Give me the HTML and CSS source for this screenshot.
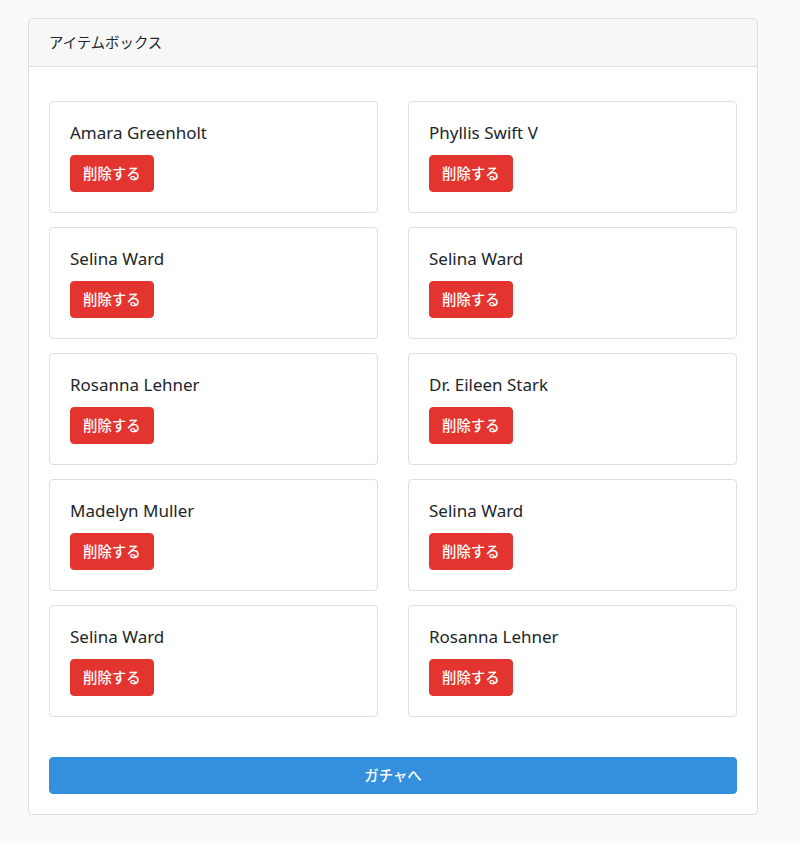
FILE: index.html
```html
<!DOCTYPE html>
<html lang="ja">
<head>
<meta charset="utf-8">
<title>アイテムボックス</title>
<link rel="stylesheet" href="styles.css">
</head>
<body>
<div class="page">
  <div class="card">
    <div class="card-header">アイテムボックス</div>
    <div class="card-body">
      <div class="grid">
        <div class="item"><div class="name">Amara Greenholt</div><button class="btn-del">削除する</button></div>
        <div class="item"><div class="name">Phyllis Swift V</div><button class="btn-del">削除する</button></div>
        <div class="item"><div class="name">Selina Ward</div><button class="btn-del">削除する</button></div>
        <div class="item"><div class="name">Selina Ward</div><button class="btn-del">削除する</button></div>
        <div class="item"><div class="name">Rosanna Lehner</div><button class="btn-del">削除する</button></div>
        <div class="item"><div class="name">Dr. Eileen Stark</div><button class="btn-del">削除する</button></div>
        <div class="item"><div class="name">Madelyn Muller</div><button class="btn-del">削除する</button></div>
        <div class="item"><div class="name">Selina Ward</div><button class="btn-del">削除する</button></div>
        <div class="item"><div class="name">Selina Ward</div><button class="btn-del">削除する</button></div>
        <div class="item"><div class="name">Rosanna Lehner</div><button class="btn-del">削除する</button></div>
      </div>
      <button class="btn-gacha">ガチャへ</button>
    </div>
  </div>
</div>
</body>
</html>
```
FILE: styles.css
```css
html, body {
  margin: 0;
  padding: 0;
}
body {
  background: #f8fafc;
  color: #212529;
  font-family: "Noto Sans", "Noto Sans CJK JP", sans-serif;
  font-size: 14.4px;
}
.page {
  padding: 18px 42px 29px 28px;
}
.card {
  width: 730px;
  box-sizing: border-box;
  background: #fff;
  border: 1px solid #dfdfdf;
  border-radius: 4px;
}
.card-header {
  background: #f7f7f7;
  border-bottom: 1px solid #dfdfdf;
  padding: 0 20px;
  height: 47px;
  line-height: 47px;
  font-size: 14.4px;
  border-radius: 3px 3px 0 0;
}
.card-body {
  padding: 20px;
  display: flex;
  flex-direction: column;
}
.grid {
  margin-top: 14px;
  display: grid;
  grid-template-columns: 1fr 1fr;
  column-gap: 30px;
  row-gap: 14px;
}
.item {
  border: 1px solid #dfdfdf;
  border-radius: 4px;
  padding: 20px;
  height: 112px;
  box-sizing: border-box;
  display: flex;
  flex-direction: column;
  align-items: flex-start;
}
.name {
  font-size: 17px;
  line-height: 22px;
  margin-bottom: 11px;
}
.btn-del {
  background: #e3342f;
  color: #fff;
  border: 1px solid #e3342f;
  border-radius: 4px;
  font-family: inherit;
  font-size: 14.4px;
  font-weight: 500;
  height: 37px;
  line-height: 22px;
  padding: 0 12px;
  white-space: nowrap;
}
.btn-gacha {
  margin-top: 40px;
  background: #3490dc;
  color: #fff;
  border: 1px solid #3490dc;
  border-radius: 4px;
  font-family: inherit;
  font-size: 14.4px;
  font-weight: 500;
  height: 37px;
  line-height: 22px;
  width: 100%;
  white-space: nowrap;
}
```
